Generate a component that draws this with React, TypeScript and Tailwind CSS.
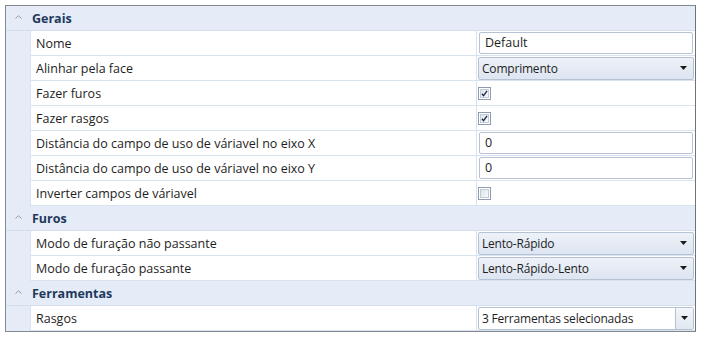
import React from 'react';

type Row =
  | { label: string; kind: 'text'; value: string }
  | { label: string; kind: 'combo'; value: string }
  | { label: string; kind: 'check'; checked: boolean }
  | { label: string; kind: 'multi'; value: string };

interface Section {
  title: string;
  rows: Row[];
}

const sections: Section[] = [
  {
    title: 'Gerais',
    rows: [
      { label: 'Nome', kind: 'text', value: 'Default' },
      { label: 'Alinhar pela face', kind: 'combo', value: 'Comprimento' },
      { label: 'Fazer furos', kind: 'check', checked: true },
      { label: 'Fazer rasgos', kind: 'check', checked: true },
      { label: 'Distância do campo de uso de váriavel no eixo X', kind: 'text', value: '0' },
      { label: 'Distância do campo de uso de váriavel no eixo Y', kind: 'text', value: '0' },
      { label: 'Inverter campos de váriavel', kind: 'check', checked: false },
    ],
  },
  {
    title: 'Furos',
    rows: [
      { label: 'Modo de furação não passante', kind: 'combo', value: 'Lento-Rápido' },
      { label: 'Modo de furação passante', kind: 'combo', value: 'Lento-Rápido-Lento' },
    ],
  },
  {
    title: 'Ferramentas',
    rows: [{ label: 'Rasgos', kind: 'multi', value: '3 Ferramentas selecionadas' }],
  },
];

const Arrow = () => (
  <svg width="7" height="4" viewBox="0 0 7 4">
    <path d="M0 0h7L3.5 4z" fill="#1b1b1b" />
  </svg>
);

const Chevron = () => (
  <svg width="7" height="4" viewBox="0 0 7 4">
    <path d="M0.5 3.5L3.5 0.8L6.5 3.5" fill="none" stroke="#8d9cb2" strokeWidth="1" />
  </svg>
);

const CheckBox = ({ checked }: { checked: boolean }) => (
  <div className="w-[13px] h-[13px] border border-[#8e9bb0] bg-white p-px">
    <div className="w-full h-full border border-[#c3cbd8] bg-gradient-to-br from-[#dfe4ec] to-[#f8f9fb] flex items-center justify-center">
      {checked && (
        <svg width="9" height="9" viewBox="0 0 9 9">
          <path d="M1.2 4.8L3.3 7.3L7.8 1.2" fill="none" stroke="#1d2a44" strokeWidth="1.7" />
        </svg>
      )}
    </div>
  </div>
);

const Editor = ({ row }: { row: Row }) => {
  if (row.kind === 'text') {
    return (
      <div className="ml-[2px] mr-[2px] h-[22px] border border-[#b7c3d3] rounded-[2px] bg-white flex items-center px-[5px] pt-px text-[#1e1e1e]">
        {row.value}
      </div>
    );
  }
  if (row.kind === 'combo') {
    return (
      <div className="ml-px mr-px h-[23px] border border-[#b5c2d4] rounded-[2px] bg-gradient-to-b from-[#eef2f8] to-[#dde5f1] flex items-center justify-between pl-[3px] pr-[6px] text-[12px] tracking-[-0.2px] text-[#1e1e1e]">
        <span className="pt-px">{row.value}</span>
        <Arrow />
      </div>
    );
  }
  if (row.kind === 'multi') {
    return (
      <div className="ml-px mr-px h-[23px] border border-[#b5c2d4] rounded-[2px] bg-white flex items-stretch text-[12px] tracking-[-0.2px] text-[#1e1e1e]">
        <span className="flex-1 flex items-center pl-[3px] pt-px">{row.value}</span>
        <div className="w-[18px] border-l border-[#b5c2d4] bg-gradient-to-b from-[#f3f6fa] to-[#e1e8f2] flex items-center justify-center">
          <Arrow />
        </div>
      </div>
    );
  }
  return (
    <div className="pl-px flex items-center">
      <CheckBox checked={row.checked} />
    </div>
  );
};

export default function App() {
  return (
    <div className="w-[704px] h-[339px] bg-white pt-[5px] pl-[5px] font-['Open_Sans',sans-serif] text-[12.5px] leading-none">
      <div className="w-[691px] h-[327px] border border-[#838790] border-r-[#6f737b] bg-white">
        {sections.map((s) => (
          <div key={s.title}>
            <div className="h-[25px] flex items-center bg-[#e5ecf7] border-b border-[#d4deec]">
              <div className="w-[24px] flex justify-center pl-px pb-[2px]">
                <Chevron />
              </div>
              <span className="pl-[2px] pt-[2px] font-bold text-[#1e395b]">{s.title}</span>
            </div>
            {s.rows.map((r) => (
              <div key={r.label} className="h-[25px] flex bg-[#e5ecf7]">
                <div className="w-[24px]" />
                <div className="flex-1 flex bg-white border-b border-l border-[#d9e3f0]">
                  <div className="flex-1 flex items-center pl-[5px] pt-[2px] text-[#1e1e1e]">{r.label}</div>
                  <div className="w-[219px] border-l border-[#d9e3f0] flex flex-col justify-center">
                    <Editor row={r} />
                  </div>
                </div>
              </div>
            ))}
          </div>
        ))}
      </div>
    </div>
  );
}
